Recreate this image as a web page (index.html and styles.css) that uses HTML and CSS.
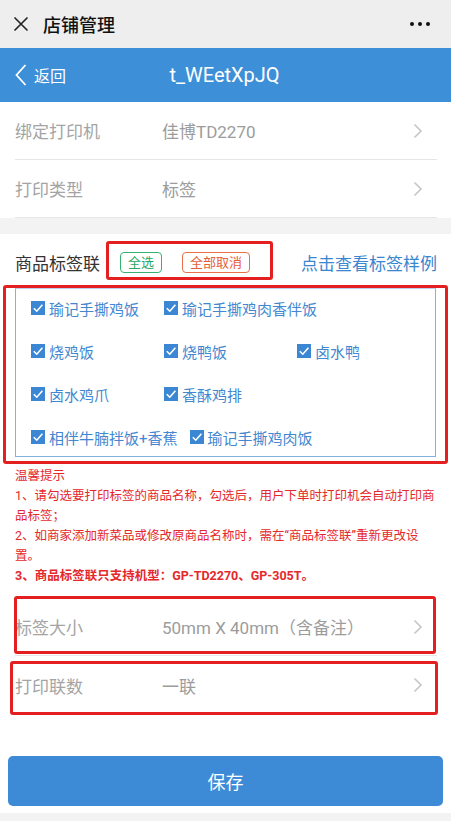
FILE: index.html
```html
<!DOCTYPE html>
<html lang="zh">
<head>
<meta charset="utf-8">
<title>店铺管理</title>
<link rel="stylesheet" href="styles.css">
</head>
<body>
<div class="topbar">
  <svg class="close" width="16" height="16" viewBox="0 0 16 16"><path d="M1.5 1.5 L14.5 14.5 M14.5 1.5 L1.5 14.5" stroke="#222" stroke-width="1.6" fill="none"/></svg>
  <span class="top-title">店铺管理</span>
  <span class="dots"><i></i><i></i><i></i></span>
</div>
<div class="header">
  <div class="back">
    <svg width="12" height="22" viewBox="0 0 12 22"><path d="M10.5 1 L1.5 11 L10.5 21" stroke="#fff" stroke-width="1.8" fill="none"/></svg>
    <span>返回</span>
  </div>
  <div class="head-title">t_WEetXpJQ</div>
  <div></div>
</div>

<div class="settings">
  <div class="row">
    <span class="label">绑定打印机</span>
    <span class="value">佳博TD2270</span>
    <svg class="chev" width="10" height="16" viewBox="0 0 10 16"><path d="M1.5 1.5 L8 8 L1.5 14.5" stroke="#c6c6c6" stroke-width="1.6" fill="none"/></svg>
  </div>
  <div class="row">
    <span class="label">打印类型</span>
    <span class="value">标签</span>
    <svg class="chev" width="10" height="16" viewBox="0 0 10 16"><path d="M1.5 1.5 L8 8 L1.5 14.5" stroke="#c6c6c6" stroke-width="1.6" fill="none"/></svg>
  </div>
</div>

<div class="label-section">
  <div class="label-head">
    <span class="lh-title">商品标签联</span>
    <div class="tags">
      <span class="tag tag-green">全选</span>
      <span class="tag tag-red">全部取消</span>
      <span class="mark mark-tags"></span>
    </div>
    <span class="lh-link">点击查看标签样例</span>
  </div>

  <div class="items-mark">
    <div class="items">
      <label class="item"><svg class="cb" width="14" height="14" viewBox="0 0 14 14"><rect width="14" height="14" fill="#3b87d4"/><path d="M2.8 7.2 L5.8 10.2 L11.4 3.8" stroke="#fff" stroke-width="1.6" fill="none"/></svg><span>瑜记手撕鸡饭</span></label>
      <label class="item"><svg class="cb" width="14" height="14" viewBox="0 0 14 14"><rect width="14" height="14" fill="#3b87d4"/><path d="M2.8 7.2 L5.8 10.2 L11.4 3.8" stroke="#fff" stroke-width="1.6" fill="none"/></svg><span>瑜记手撕鸡肉香伴饭</span></label>
      <label class="item"><svg class="cb" width="14" height="14" viewBox="0 0 14 14"><rect width="14" height="14" fill="#3b87d4"/><path d="M2.8 7.2 L5.8 10.2 L11.4 3.8" stroke="#fff" stroke-width="1.6" fill="none"/></svg><span>烧鸡饭</span></label>
      <label class="item"><svg class="cb" width="14" height="14" viewBox="0 0 14 14"><rect width="14" height="14" fill="#3b87d4"/><path d="M2.8 7.2 L5.8 10.2 L11.4 3.8" stroke="#fff" stroke-width="1.6" fill="none"/></svg><span>烧鸭饭</span></label>
      <label class="item"><svg class="cb" width="14" height="14" viewBox="0 0 14 14"><rect width="14" height="14" fill="#3b87d4"/><path d="M2.8 7.2 L5.8 10.2 L11.4 3.8" stroke="#fff" stroke-width="1.6" fill="none"/></svg><span>卤水鸭</span></label>
      <label class="item"><svg class="cb" width="14" height="14" viewBox="0 0 14 14"><rect width="14" height="14" fill="#3b87d4"/><path d="M2.8 7.2 L5.8 10.2 L11.4 3.8" stroke="#fff" stroke-width="1.6" fill="none"/></svg><span>卤水鸡爪</span></label>
      <label class="item"><svg class="cb" width="14" height="14" viewBox="0 0 14 14"><rect width="14" height="14" fill="#3b87d4"/><path d="M2.8 7.2 L5.8 10.2 L11.4 3.8" stroke="#fff" stroke-width="1.6" fill="none"/></svg><span>香酥鸡排</span></label>
      <label class="item"><svg class="cb" width="14" height="14" viewBox="0 0 14 14"><rect width="14" height="14" fill="#3b87d4"/><path d="M2.8 7.2 L5.8 10.2 L11.4 3.8" stroke="#fff" stroke-width="1.6" fill="none"/></svg><span>相伴牛腩拌饭+香蕉</span></label>
      <label class="item"><svg class="cb" width="14" height="14" viewBox="0 0 14 14"><rect width="14" height="14" fill="#3b87d4"/><path d="M2.8 7.2 L5.8 10.2 L11.4 3.8" stroke="#fff" stroke-width="1.6" fill="none"/></svg><span>瑜记手撕鸡肉饭</span></label>
    </div>
  </div>

  <div class="tips">
    <p>温馨提示</p>
    <p>1、请勾选要打印标签的商品名称，勾选后，用户下单时打印机会自动打印商品标签；</p>
    <p>2、如商家添加新菜品或修改原商品名称时，需在“商品标签联”重新更改设置。</p>
    <p class="strong">3、商品标签联只支持机型：GP-TD2270、GP-305T。</p>
  </div>

  <div class="row row-a">
    <span class="label">标签大小</span>
    <span class="value">50mm X 40mm（含备注）</span>
    <svg class="chev" width="10" height="16" viewBox="0 0 10 16"><path d="M1.5 1.5 L8 8 L1.5 14.5" stroke="#c6c6c6" stroke-width="1.6" fill="none"/></svg>
    <span class="mark mark-a"></span>
  </div>
  <div class="row row-b">
    <span class="label">打印联数</span>
    <span class="value">一联</span>
    <svg class="chev" width="10" height="16" viewBox="0 0 10 16"><path d="M1.5 1.5 L8 8 L1.5 14.5" stroke="#c6c6c6" stroke-width="1.6" fill="none"/></svg>
    <span class="mark mark-b"></span>
  </div>

  <div class="save-wrap">
    <button class="save">保存</button>
  </div>
</div>
</body>
</html>
```

FILE: styles.css
```css
* { box-sizing: border-box; }
html, body {
  margin: 0;
  padding: 0;
}
body {
  background: #f3f3f3;
  font-family: Roboto, "Noto Sans CJK SC", sans-serif;
  color: #333;
}
.topbar {
  height: 48px;
  background: #eeeeee;
  display: flex;
  align-items: center;
  padding: 0 21px 0 13px;
}
.close { margin-right: 14px; }
.top-title {
  font-size: 18px;
  color: #111;
  flex: 1;
  font-weight: 500;
}
.dots { display: flex; gap: 4px; }
.dots i {
  width: 4px; height: 4px; border-radius: 50%;
  background: #111; display: block;
}
.header {
  height: 54px;
  background: #3d8fd8;
  color: #fff;
  display: grid;
  grid-template-columns: 1fr auto 1fr;
  align-items: center;
  padding: 0 15px;
}
.back {
  display: flex;
  align-items: center;
  gap: 7px;
  font-size: 16px;
}
.head-title {
  font-size: 20px;
  padding-right: 2px;
}
.settings {
  background: #fff;
  margin-bottom: 16px;
}
.row {
  display: flex;
  align-items: center;
  height: 58px;
  margin: 0 14px 0 15px;
  border-bottom: 1px solid #e6e6e6;
  font-size: 17px;
  color: #a4a4a4;
  position: relative;
}
.label { width: 147px; }
.value { flex: 1; color: #9c9c9c; }
.chev { margin-right: 14px; }
.label-section { background: #fff; }
.label-head {
  height: 51px;
  padding: 6px 14px 0 15px;
  display: flex;
  align-items: center;
}
.lh-title { font-size: 17px; color: #333; margin-right: 20px; }
.tags {
  display: flex;
  gap: 20px;
  position: relative;
  flex: 1;
}
.tag {
  font-size: 13px;
  height: 21px;
  line-height: 19px;
  padding: 0 7px;
  border-radius: 4px;
  border: 1px solid;
}
.tag-green { color: #2aa866; border-color: #36b270; }
.tag-red { color: #e5603a; border-color: #e8704a; }
.lh-link { font-size: 17px; color: #3a86cf; }
.mark {
  position: absolute;
  border: 3px solid #e3201f;
  border-radius: 3px;
  pointer-events: none;
}
.mark-tags { left: -14px; top: -11px; width: 167px; height: 39px; }
.mark-a { left: -1px; top: -2px; width: 422px; height: 58px; }
.mark-b { left: -5px; top: 5px; width: 428px; height: 54px; }
.items-mark {
  margin: 0 3px;
  border: 3px solid #e3201f;
  border-radius: 3px;
  padding: 0 9px 4px;
}
.items {
  border: 1.5px solid #86b0dd;
  border-top-color: #b9d1ec;
  padding: 0 0 0 15px;
  display: flex;
  flex-wrap: wrap;
  column-gap: 12px;
  row-gap: 5px;
}
.item {
  min-width: 121px;
  height: 38px;
  display: flex;
  align-items: center;
  gap: 4px;
  font-size: 15px;
  color: #4287d0;
}
.cb { flex: none; }
.tips {
  margin-top: 2px;
  padding: 0 14px 0 15px;
  color: #e5282b;
  font-size: 12.5px;
  line-height: 20px;
}
.tips p { margin: 0; }
.tips .strong { font-weight: 700; }
.row-a { margin-top: 12px; }
.row-b { border-bottom: none; }
.save-wrap {
  padding: 42px 8px 7px;
}
.save {
  display: block;
  width: 100%;
  height: 50px;
  border: none;
  border-radius: 5px;
  background: #3d8bd7;
  color: #fff;
  font-size: 18px;
  font-family: Roboto, "Noto Sans CJK SC", sans-serif;
}
```
